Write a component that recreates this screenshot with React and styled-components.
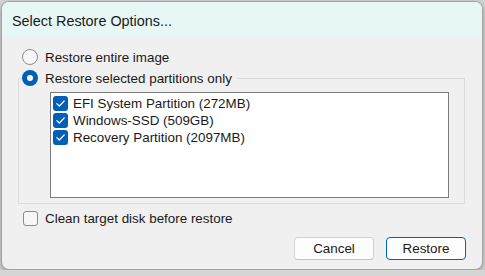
import styled, { createGlobalStyle } from 'styled-components';

const GlobalStyle = createGlobalStyle`
  html, body {
    margin: 0;
    padding: 0;
    background: #d6d6d6;
  }
  body {
    font-family: "Liberation Sans", Arial, sans-serif;
    font-size: 13.4px;
    color: #1a1a1a;
  }
  #root {
    padding: 1px 0 0 1px;
  }
`;

const Dialog = styled.div`
  box-sizing: border-box;
  width: 482px;
  height: 269px;
  border: 1px solid #a3a3a3;
  border-radius: 8px;
  background: #f0f0f0;
  box-shadow: 0 2px 6px rgba(0, 0, 0, 0.3);
  overflow: hidden;
  display: flex;
  flex-direction: column;
`;

const TitleBar = styled.div`
  box-sizing: border-box;
  height: 35px;
  padding: 3px 0 0 10px;
  display: flex;
  align-items: center;
  background: #e6f7f5;
  font-size: 14.4px;
`;

const Body = styled.div`
  flex: 1;
  display: flex;
  flex-direction: column;
  padding: 10px 16px 0 16px;
`;

const OptionRow = styled.label`
  display: flex;
  align-items: center;
  gap: 7px;
  height: 20px;
  padding-left: ${(p) => p.$indent || 0}px;
`;

const Radio = styled.span`
  box-sizing: border-box;
  width: 16px;
  height: 16px;
  border-radius: 50%;
  flex-shrink: 0;
  border: ${(p) => (p.$checked ? 'none' : '1px solid #8b8b8b')};
  background: ${(p) => (p.$checked ? '#005fb8' : '#f7f7f7')};
  display: flex;
  align-items: center;
  justify-content: center;
  &::after {
    content: '';
    display: ${(p) => (p.$checked ? 'block' : 'none')};
    width: 6px;
    height: 6px;
    border-radius: 50%;
    background: #ffffff;
  }
`;

const Group = styled.fieldset`
  margin: 1px 1px 0 0;
  padding: 0 15px 5px 31px;
  border: 1px solid #dcdcdc;
  min-width: 0;
`;

const Legend = styled.legend`
  margin-left: -28px;
  padding: 0 5px 0 0;
`;

const ListBox = styled.div`
  box-sizing: border-box;
  margin-top: 4px;
  height: 106px;
  border: 1px solid #7c7c7c;
  background: #ffffff;
  padding: 2px 2px;
  display: flex;
  flex-direction: column;
`;

const Item = styled.label`
  display: flex;
  align-items: center;
  gap: 5px;
  height: 17px;
`;

const Box = styled.span`
  box-sizing: border-box;
  width: 15px;
  height: 15px;
  flex-shrink: 0;
  border-radius: 3px;
  border: ${(p) => (p.$checked ? 'none' : '1px solid #8b8b8b')};
  background: ${(p) => (p.$checked ? '#005fb8' : '#f7f7f7')};
  display: flex;
  align-items: center;
  justify-content: center;
`;

const Footer = styled.div`
  display: flex;
  justify-content: flex-end;
  gap: 12px;
  margin-top: 9px;
`;

const Button = styled.button`
  box-sizing: border-box;
  width: 80px;
  height: 23px;
  border-radius: 4px;
  font-family: inherit;
  font-size: 13.4px;
  color: #1a1a1a;
  background: #fdfdfd;
  border: 1px solid ${(p) => (p.$primary ? '#0063b8' : '#d3d3d3')};
  border-bottom-color: ${(p) => (p.$primary ? '#0063b8' : '#c4c4c4')};
  padding: 0;
`;

function Check() {
  return (
    <svg width="15" height="15" viewBox="0 0 15 15">
      <path d="M3.8 7.6 L6.3 10 L11.2 5" fill="none" stroke="#ffffff" strokeWidth="1.2" strokeLinecap="round" strokeLinejoin="round" />
    </svg>
  );
}

const partitions = [
  'EFI System Partition (272MB)',
  'Windows-SSD (509GB)',
  'Recovery Partition (2097MB)',
];

export default function App() {
  return (
    <>
      <GlobalStyle />
      <Dialog>
        <TitleBar>Select Restore Options...</TitleBar>
        <Body>
          <OptionRow $indent={4}>
            <Radio />
            Restore entire image
          </OptionRow>
          <Group>
            <Legend>
              <OptionRow>
                <Radio $checked />
                Restore selected partitions only
              </OptionRow>
            </Legend>
            <ListBox>
              {partitions.map((p) => (
                <Item key={p}>
                  <Box $checked>
                    <Check />
                  </Box>
                  {p}
                </Item>
              ))}
            </ListBox>
          </Group>
          <OptionRow $indent={5} style={{ marginTop: 4 }}>
            <Box />
            Clean target disk before restore
          </OptionRow>
          <Footer>
            <Button>Cancel</Button>
            <Button $primary>Restore</Button>
          </Footer>
        </Body>
      </Dialog>
    </>
  );
}
